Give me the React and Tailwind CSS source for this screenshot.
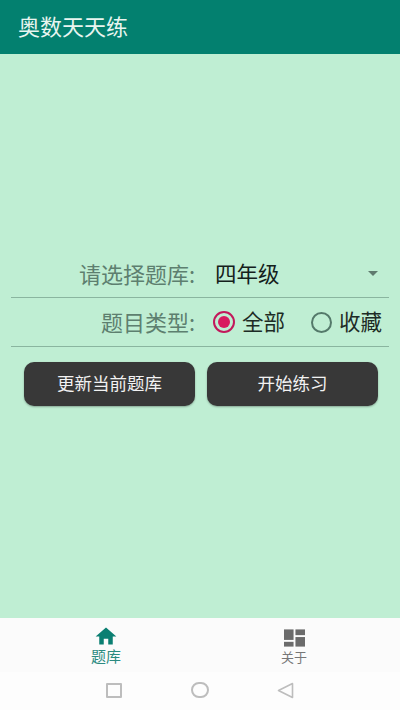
import React from 'react';

const cjk = { fontFamily: '"Noto Sans CJK SC", "Noto Sans", sans-serif' };

function HomeIcon() {
  return (
    <svg width="22" height="18" viewBox="0 0 24 20" fill="#0b7f72">
      <path d="M12 0.5 L23.5 10.5 H19.5 V19.5 H14.5 V13 H9.5 V19.5 H4.5 V10.5 H0.5 Z" />
    </svg>
  );
}

function GridIcon() {
  return (
    <svg width="21" height="18" viewBox="0 0 22 18" fill="#6b6b6b">
      <rect x="0" y="0" width="10" height="11" />
      <rect x="12" y="0" width="10" height="6" />
      <rect x="0" y="13" width="10" height="5" />
      <rect x="12" y="8" width="10" height="10" />
    </svg>
  );
}

function Radio({ checked, label }) {
  return (
    <div className="flex items-center">
      {checked ? (
        <div className="flex h-[22px] w-[22px] items-center justify-center rounded-full border-[2.5px] border-[#c2185b]">
          <div className="h-[12px] w-[12px] rounded-full bg-[#d81b60]" />
        </div>
      ) : (
        <div className="h-[21px] w-[21px] rounded-full border-[2px] border-[#54796a]" />
      )}
      <span className="ml-[7px] pb-[2px] text-[21.5px] leading-[28px] text-[#1d2b25]">{label}</span>
    </div>
  );
}

export default function App() {
  return (
    <div className="flex h-[710px] w-[400px] flex-col overflow-hidden bg-[#fbfbfb]" style={cjk}>
      <header className="flex h-[54px] items-center bg-[#03806f] pb-[4px] pl-[18px]">
        <h1 className="text-[22px] font-normal text-[#e8f5f0]">奥数天天练</h1>
      </header>

      <main className="flex h-[564px] flex-col bg-[#bfeed3] px-[11px] pt-[202px]">
        <div className="flex h-[42px] items-center border-b-[1.5px] border-[#8ab59f] pb-[6px]">
          <span className="w-[184px] whitespace-nowrap text-right text-[22px] text-[#5d7f6f]">请选择题库:</span>
          <span className="ml-[20px] text-[21.5px] text-[#14201b]">四年级</span>
          <svg className="ml-auto mr-[11px]" width="10" height="5" viewBox="0 0 10 5" fill="#5f7a6e">
            <path d="M0 0 H10 L5 5 Z" />
          </svg>
        </div>
        <div className="flex h-[49px] items-center border-b-[1.5px] border-[#8ab59f]">
          <span className="w-[184px] whitespace-nowrap pb-[2px] text-right text-[22px] text-[#5d7f6f]">题目类型:</span>
          <div className="ml-[18px]"><Radio checked label="全部" /></div>
          <div className="ml-[26px]"><Radio label="收藏" /></div>
        </div>
        <div className="mt-[15px] flex gap-[12px] pl-[13px]">
          <button className="h-[44px] w-[171px] shrink-0 rounded-[10px] bg-[#383838] pb-[2px] text-[17.5px] text-[#f2f2f2] shadow-[0_1px_2px_rgba(0,0,0,0.3)]">更新当前题库</button>
          <button className="h-[44px] w-[171px] shrink-0 rounded-[10px] bg-[#383838] pb-[2px] text-[17.5px] text-[#f2f2f2] shadow-[0_1px_2px_rgba(0,0,0,0.3)]">开始练习</button>
        </div>
      </main>

      <nav className="flex h-[54px] bg-[#fbfbfb]">
        <div className="flex w-[212px] flex-col items-center pt-[9px]">
          <HomeIcon />
          <span className="mt-[1px] text-[15px] leading-[20px] text-[#2a8a80]">题库</span>
        </div>
        <div className="flex w-[164px] flex-col items-center pt-[11px]">
          <GridIcon />
          <span className="text-[13px] leading-[20px] text-[#777777]">关于</span>
        </div>
      </nav>

      <div className="flex h-[38px] items-center bg-[#fdfdfd] pb-[2px] pl-[106px]">
        <div className="h-[15px] w-[16px] rounded-[1px] border-2 border-[#bdbdbd]" />
        <div className="ml-[69px] h-[16px] w-[18px] rounded-full border-2 border-[#bdbdbd]" />
        <svg className="ml-[68px]" width="17" height="17" viewBox="0 0 17 17" fill="none" stroke="#bdbdbd" strokeWidth="1.6">
          <path d="M15.5 1.5 V15.5 L1.5 8.5 Z" strokeLinejoin="round" />
        </svg>
      </div>
    </div>
  );
}
